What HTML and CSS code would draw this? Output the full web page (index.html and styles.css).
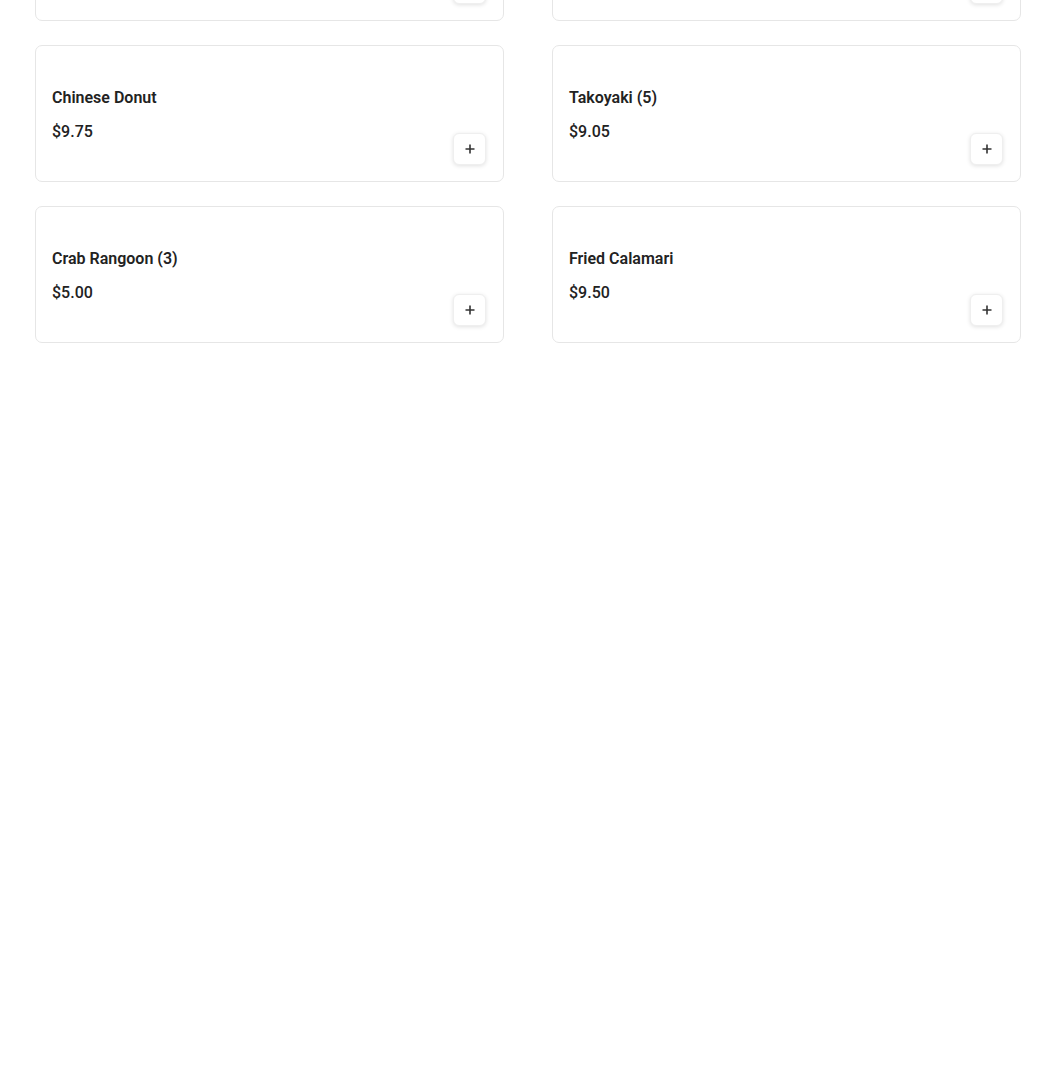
FILE: index.html
```html
<!DOCTYPE html>
<html lang="en">
<head>
    <meta charset="UTF-8">
    <meta name="viewport" content="width=device-width, initial-scale=1.0">
    <title>Appetizers</title>
    <link rel="stylesheet" href="styles.css">
</head>
<body>
    <div class="menu-grid">
        <div class="menu-item">
            <div class="item-info">
                <h3 class="item-name">Edamame</h3>
                <p class="item-price">$6.50</p>
            </div>
            <button class="add-button" aria-label="Add"><svg width="12" height="12" viewBox="0 0 12 12"><path d="M6 1.5v9M1.5 6h9" stroke="#333" stroke-width="1.6" fill="none"/></svg></button>
        </div>
        <div class="menu-item">
            <div class="item-info">
                <h3 class="item-name">Spring Roll (2)</h3>
                <p class="item-price">$5.50</p>
            </div>
            <button class="add-button" aria-label="Add"><svg width="12" height="12" viewBox="0 0 12 12"><path d="M6 1.5v9M1.5 6h9" stroke="#333" stroke-width="1.6" fill="none"/></svg></button>
        </div>
        <div class="menu-item">
            <div class="item-info">
                <h3 class="item-name">Chinese Donut</h3>
                <p class="item-price">$9.75</p>
            </div>
            <button class="add-button" aria-label="Add"><svg width="12" height="12" viewBox="0 0 12 12"><path d="M6 1.5v9M1.5 6h9" stroke="#333" stroke-width="1.6" fill="none"/></svg></button>
        </div>
        <div class="menu-item">
            <div class="item-info">
                <h3 class="item-name">Takoyaki (5)</h3>
                <p class="item-price">$9.05</p>
            </div>
            <button class="add-button" aria-label="Add"><svg width="12" height="12" viewBox="0 0 12 12"><path d="M6 1.5v9M1.5 6h9" stroke="#333" stroke-width="1.6" fill="none"/></svg></button>
        </div>
        <div class="menu-item">
            <div class="item-info">
                <h3 class="item-name">Crab Rangoon (3)</h3>
                <p class="item-price">$5.00</p>
            </div>
            <button class="add-button" aria-label="Add"><svg width="12" height="12" viewBox="0 0 12 12"><path d="M6 1.5v9M1.5 6h9" stroke="#333" stroke-width="1.6" fill="none"/></svg></button>
        </div>
        <div class="menu-item">
            <div class="item-info">
                <h3 class="item-name">Fried Calamari</h3>
                <p class="item-price">$9.50</p>
            </div>
            <button class="add-button" aria-label="Add"><svg width="12" height="12" viewBox="0 0 12 12"><path d="M6 1.5v9M1.5 6h9" stroke="#333" stroke-width="1.6" fill="none"/></svg></button>
        </div>
    </div>
</body>
</html>
```

FILE: styles.css
```css
body {
    font-family: Roboto, "Liberation Sans", Arial, sans-serif;
    margin: 0;
    padding: 0;
    background-color: #fff;
    color: #222;
}
.menu-grid {
    display: grid;
    grid-template-columns: 1fr 1fr;
    gap: 24px 48px;
    width: 986px;
    margin: -116px 0 0 35px;
}
.menu-item {
    height: 137px;
    box-sizing: border-box;
    display: flex;
    justify-content: space-between;
    align-items: flex-end;
    padding: 16px 17px 16px 16px;
    border: 1px solid #e6e6e6;
    border-radius: 7px;
    background: #fff;
}
.item-info {
    align-self: flex-start;
    padding-top: 26px;
}
.item-name {
    margin: 0;
    font-size: 16px;
    font-weight: 600;
    line-height: 20px;
    color: #222;
}
.item-price {
    margin: 12px 0 0;
    font-size: 16px;
    font-weight: 500;
    line-height: 24px;
    color: #222;
}
.add-button {
    width: 33px;
    height: 32px;
    padding: 0;
    display: flex;
    align-items: center;
    justify-content: center;
    background: #fff;
    border: 1px solid #efefef;
    border-radius: 6px;
    box-shadow: 0 1px 4px rgba(0, 0, 0, 0.12);
    cursor: pointer;
}
```
